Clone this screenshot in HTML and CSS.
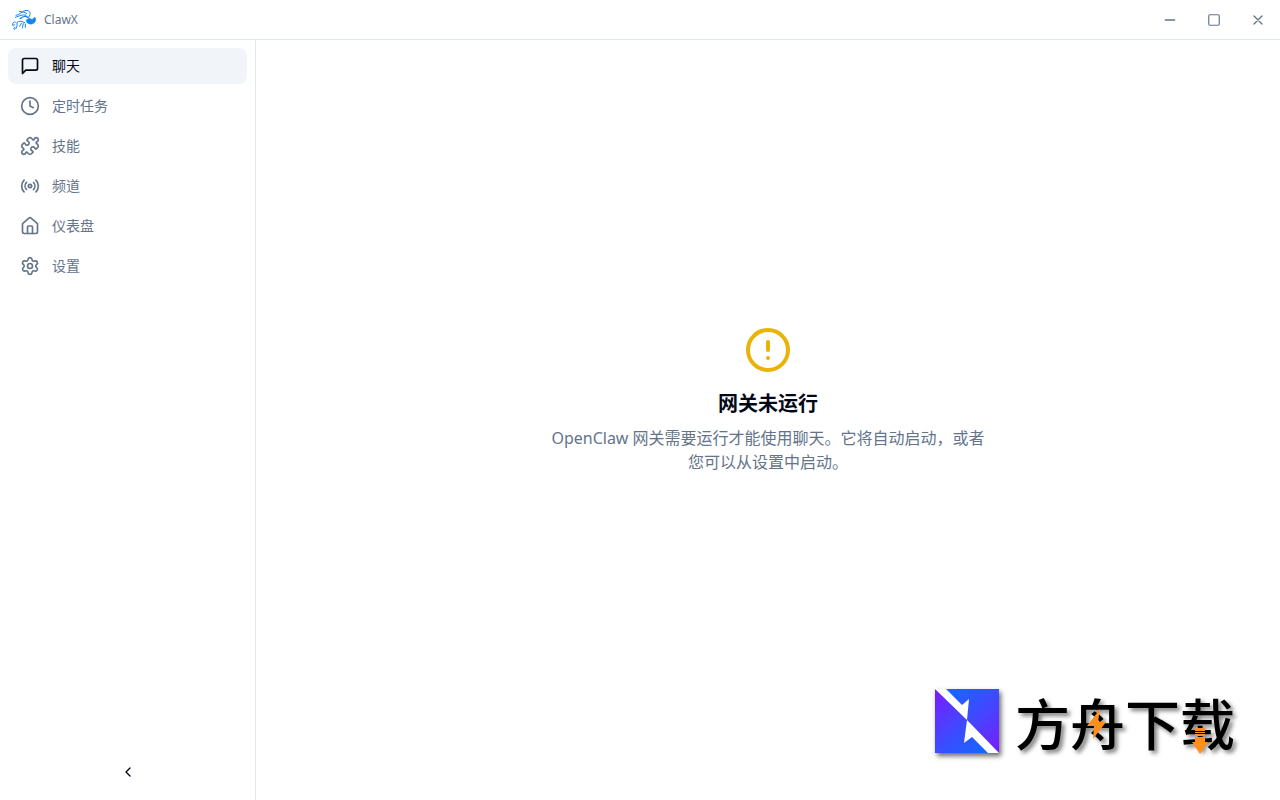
FILE: index.html
```html
<!DOCTYPE html>
<html lang="zh-CN">
<head>
    <meta charset="UTF-8">
    <meta name="viewport" content="width=device-width, initial-scale=1.0">
    <title>ClawX</title>
    <link rel="stylesheet" href="styles.css">
</head>
<body>
    <header class="titlebar">
        <div class="brand">
            <svg class="logo" viewBox="36 27 72 66" fill="none" stroke="#1583f0" stroke-width="3" stroke-linecap="round" stroke-linejoin="round" aria-hidden="true">
                <path d="M48 46C60 45 66 33 78 31C87 31 92 37 90 44L86 52"/>
                <path d="M58 34C66 36 74 36 80 41"/>
                <path d="M46 52C58 48 68 42 78 46"/>
                <path stroke-width="4" d="M60 56C68 49 77 47 84 52"/>
                <path d="M46 66C40 65 37 69 38 76C39 80 42 77 43 73"/>
                <path d="M51 68C52 76 51 84 45 88C40 88 40 83 45 82"/>
                <path d="M52 66C58 62 66 64 74 68M64 70L59 79M70 71L67 84M76 72L76 82"/>
                <path fill="#1583f0" stroke-width="2" d="M80 60C86 53 92 56 96 59L104 52C107 54 108 59 105 65C101 72 92 74 86 71C81 69 78 65 80 60Z"/>
            </svg>
            <span>ClawX</span>
        </div>
        <div class="window-controls">
            <button type="button" aria-label="最小化">
                <svg class="icon icon-sm" viewBox="0 0 24 24"><path d="M5 12h14"/></svg>
            </button>
            <button type="button" aria-label="最大化">
                <svg class="icon icon-xs" viewBox="0 0 24 24"><rect width="18" height="18" x="3" y="3" rx="2"/></svg>
            </button>
            <button type="button" aria-label="关闭">
                <svg class="icon icon-sm" viewBox="0 0 24 24"><path d="M18 6 6 18M6 6l12 12"/></svg>
            </button>
        </div>
    </header>

    <div class="layout">
        <aside class="sidebar">
            <nav>
                <a href="#chat" class="active" aria-current="page">
                    <svg class="icon" viewBox="0 0 24 24"><path d="M21 15a2 2 0 0 1-2 2H7l-4 4V5a2 2 0 0 1 2-2h14a2 2 0 0 1 2 2z"/></svg>
                    <span>聊天</span>
                </a>
                <a href="#cron">
                    <svg class="icon" viewBox="0 0 24 24"><circle cx="12" cy="12" r="10"/><path d="M12 6v6l4 2"/></svg>
                    <span>定时任务</span>
                </a>
                <a href="#skills">
                    <svg class="icon" viewBox="0 0 24 24"><path d="M15.39 4.39a1 1 0 0 0 1.68-.474 2.5 2.5 0 1 1 3.014 3.015 1 1 0 0 0-.474 1.68l1.683 1.682a2.414 2.414 0 0 1 0 3.414L19.61 15.39a1 1 0 0 1-1.68-.474 2.5 2.5 0 1 0-3.014 3.015 1 1 0 0 1 .474 1.68l-1.683 1.682a2.414 2.414 0 0 1-3.414 0L8.61 19.61a1 1 0 0 0-1.68.474 2.5 2.5 0 1 1-3.014-3.015 1 1 0 0 0 .474-1.68l-1.683-1.682a2.414 2.414 0 0 1 0-3.414L4.39 8.61a1 1 0 0 1 1.68.474 2.5 2.5 0 1 0 3.014-3.015 1 1 0 0 1-.474-1.68l1.683-1.682a2.414 2.414 0 0 1 3.414 0z"/></svg>
                    <span>技能</span>
                </a>
                <a href="#channels">
                    <svg class="icon" viewBox="0 0 24 24"><path d="M4.9 19.1C1 15.2 1 8.8 4.9 4.9"/><path d="M7.8 16.2c-2.3-2.3-2.3-6.1 0-8.5"/><circle cx="12" cy="12" r="2"/><path d="M16.2 7.8c2.3 2.3 2.3 6.1 0 8.5"/><path d="M19.1 4.9C23 8.8 23 15.1 19.1 19"/></svg>
                    <span>频道</span>
                </a>
                <a href="#dashboard">
                    <svg class="icon" viewBox="0 0 24 24"><path d="M15 21v-8a1 1 0 0 0-1-1h-4a1 1 0 0 0-1 1v8"/><path d="M3 10a2 2 0 0 1 .709-1.528l7-5.999a2 2 0 0 1 2.582 0l7 5.999A2 2 0 0 1 21 10v9a2 2 0 0 1-2 2H5a2 2 0 0 1-2-2z"/></svg>
                    <span>仪表盘</span>
                </a>
                <a href="#settings">
                    <svg class="icon" viewBox="0 0 24 24"><path d="M9.671 4.136a2.34 2.34 0 0 1 4.659 0 2.34 2.34 0 0 0 3.319 1.915 2.34 2.34 0 0 1 2.33 4.033 2.34 2.34 0 0 0 0 3.831 2.34 2.34 0 0 1-2.33 4.033 2.34 2.34 0 0 0-3.319 1.915 2.34 2.34 0 0 1-4.659 0 2.34 2.34 0 0 0-3.32-1.915 2.34 2.34 0 0 1-2.33-4.033 2.34 2.34 0 0 0 0-3.831A2.34 2.34 0 0 1 6.35 6.051a2.34 2.34 0 0 0 3.319-1.915"/><circle cx="12" cy="12" r="3"/></svg>
                    <span>设置</span>
                </a>
            </nav>
            <button type="button" class="collapse" aria-label="收起侧边栏">
                <svg class="icon icon-sm" viewBox="0 0 24 24"><path d="m15 18-6-6 6-6"/></svg>
            </button>
        </aside>

        <main>
            <svg class="icon icon-alert" viewBox="0 0 24 24"><circle cx="12" cy="12" r="10"/><path d="M12 8v4M12 16h.01"/></svg>
            <h2>网关未运行</h2>
            <p>OpenClaw 网关需要运行才能使用聊天。它将自动启动，或者您可以从设置中启动。</p>
        </main>
    </div>

    <div class="watermark">
        <svg class="mark" viewBox="0 0 64 64" aria-hidden="true">
            <defs>
                <linearGradient id="tile-top" gradientUnits="userSpaceOnUse" x1="14" y1="0" x2="64" y2="58">
                    <stop offset="0" stop-color="#1468ff"/>
                    <stop offset="0.5" stop-color="#4148ff"/>
                    <stop offset="1" stop-color="#7420ff"/>
                </linearGradient>
                <linearGradient id="tile-bottom" gradientUnits="userSpaceOnUse" x1="0" y1="6" x2="50" y2="64">
                    <stop offset="0" stop-color="#7420ff"/>
                    <stop offset="0.5" stop-color="#4148ff"/>
                    <stop offset="1" stop-color="#1468ff"/>
                </linearGradient>
            </defs>
            <path fill="#ffffff" d="M0 0h64v64H0z"/>
            <path fill="url(#tile-top)" d="M11 0H64V64L32 31L34 10L27 16Z"/>
            <path fill="url(#tile-bottom)" d="M0 0L32 31L29 54L37 48L53 64H0Z"/>
        </svg>
        <div class="wordmark">
            <span>方舟下载</span>
            <svg class="bolt" viewBox="0 0 20 30" aria-hidden="true"><path fill="#ff8f1c" d="M13 0L0 17H7L6 30L19 13H11Z"/></svg>
            <svg class="arrow" viewBox="0 0 16 26" aria-hidden="true"><path fill="#ff8f1c" d="M3 0h10v3H3zM3 4h10v1H3zM3 6h10v2H3zM3 9h10v5h3L8 26L0 14h3z"/></svg>
        </div>
    </div>
</body>
</html>
```
FILE: styles.css
```css
* {
    box-sizing: border-box;
}
body {
    margin: 0;
    min-height: 100vh;
    display: flex;
    flex-direction: column;
    position: relative;
    background: #ffffff;
    color: #020817;
    font-family: "Noto Sans", "Noto Sans CJK SC", sans-serif;
    font-size: 14px;
    line-height: 20px;
}
button {
    padding: 0;
    border: none;
    background: transparent;
    color: inherit;
    display: flex;
    align-items: center;
    justify-content: center;
    cursor: pointer;
}
.icon {
    width: 20px;
    height: 20px;
    flex-shrink: 0;
    fill: none;
    stroke: currentColor;
    stroke-width: 2;
    stroke-linecap: round;
    stroke-linejoin: round;
}
.icon-sm {
    width: 16px;
    height: 16px;
}
.icon-xs {
    width: 14px;
    height: 14px;
}

/* title bar */
.titlebar {
    height: 40px;
    display: flex;
    justify-content: space-between;
    border-bottom: 1px solid #e2e8f0;
    color: #64748b;
}
.brand {
    display: flex;
    align-items: center;
    gap: 8px;
    padding-left: 12px;
    font-size: 12px;
}
.logo {
    width: 24px;
    height: 22px;
}
.window-controls {
    display: flex;
}
.window-controls button {
    width: 44px;
}
.window-controls button:hover {
    background: #f1f5f9;
}

/* sidebar */
.layout {
    flex: 1;
    display: flex;
}
.sidebar {
    width: 256px;
    flex-shrink: 0;
    display: flex;
    flex-direction: column;
    justify-content: space-between;
    padding: 8px;
    border-right: 1px solid #e2e8f0;
}
nav {
    display: flex;
    flex-direction: column;
    gap: 4px;
}
nav a {
    display: flex;
    align-items: center;
    gap: 12px;
    padding: 8px 12px;
    border-radius: 8px;
    color: #64748b;
    text-decoration: none;
}
nav a:hover,
nav a.active {
    background: #f1f5f9;
    color: #020817;
}
.collapse {
    height: 40px;
}

/* gateway notice */
main {
    flex: 1;
    display: flex;
    flex-direction: column;
    align-items: center;
    justify-content: center;
    padding-bottom: 40px;
    text-align: center;
}
.icon-alert {
    width: 48px;
    height: 48px;
    margin-bottom: 16px;
    color: #eab308;
}
h2 {
    margin: 0 0 8px;
    font-size: 20px;
    line-height: 28px;
    font-weight: 700;
}
p {
    margin: 0;
    max-width: 448px;
    color: #64748b;
    font-size: 16px;
    line-height: 24px;
}

/* watermark over the page corner */
.watermark {
    position: absolute;
    right: 45px;
    bottom: 47px;
    display: flex;
    align-items: center;
    gap: 16px;
}
.mark {
    width: 64px;
    height: 64px;
    box-shadow: 2px 3px 5px rgba(0, 0, 0, 0.6);
}
.wordmark {
    position: relative;
    color: #000000;
    font-family: "Noto Sans CJK SC", sans-serif;
    font-size: 55px;
    font-weight: 500;
    line-height: 64px;
    text-shadow: 3px 3px 4px rgba(0, 0, 0, 0.5);
}
.bolt {
    position: absolute;
    left: 72px;
    top: 20px;
    width: 20px;
    height: 30px;
}
.arrow {
    position: absolute;
    left: 177px;
    top: 39px;
    width: 16px;
    height: 26px;
}
```
